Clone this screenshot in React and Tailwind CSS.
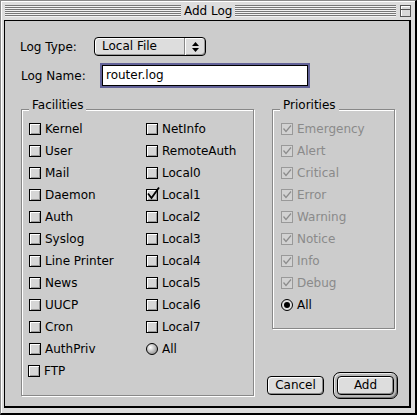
import React from 'react';

const facilitiesLeft = ['Kernel', 'User', 'Mail', 'Daemon', 'Auth', 'Syslog', 'Line Printer', 'News', 'UUCP', 'Cron', 'AuthPriv', 'FTP'];
const facilitiesRight = ['NetInfo', 'RemoteAuth', 'Local0', 'Local1', 'Local2', 'Local3', 'Local4', 'Local5', 'Local6', 'Local7'];
const priorities = ['Emergency', 'Alert', 'Critical', 'Error', 'Warning', 'Notice', 'Info', 'Debug'];

const Stripes = ({ className }) => (
  <div className={`flex flex-col ${className}`}>
    {[0, 1, 2, 3, 4, 5].map((i) => (
      <div key={i} className="h-[2px] border-t border-[#777777] bg-[#f2f2f2]" />
    ))}
  </div>
);

const CheckBox = ({ checked, disabled }) => {
  if (disabled) {
    return (
      <span className="relative w-[12px] h-[12px] shrink-0 border border-[#999999] bg-[#d2d2d2]">
        <svg className="absolute left-0 top-0" width="10" height="10" viewBox="0 0 10 10">
          <polyline points="1.5,4.5 4,7.5 9,1.5" fill="none" stroke="#8c8c8c" strokeWidth="1.2" />
        </svg>
      </span>
    );
  }
  return (
    <span className="relative w-[12px] h-[12px] shrink-0 border border-black bg-[#d6d6d6] shadow-[inset_1px_1px_0_#ffffff,inset_-1px_-1px_0_#9a9a9a]">
      {checked && (
        <svg className="absolute left-[-2px] top-[-5px] overflow-visible" width="16" height="16" viewBox="0 0 16 16">
          <polyline points="3,8.5 6.5,13 14,2.5" fill="none" stroke="#000000" strokeWidth="1.8" />
        </svg>
      )}
    </span>
  );
};

const Radio = ({ selected }) =>
  selected ? (
    <span className="flex items-center justify-center w-[12px] h-[12px] shrink-0 rounded-full border border-black bg-[#e0e0e0]">
      <span className="w-[6px] h-[6px] rounded-full bg-black" />
    </span>
  ) : (
    <span className="w-[12px] h-[12px] shrink-0 rounded-full border border-black bg-[radial-gradient(circle_at_35%_35%,#ffffff,#b4b4b4_55%,#7a7a7a)]" />
  );

const Row = ({ children, label, disabled, className = '' }) => (
  <div className={`flex items-center h-[22px] ${className}`}>
    {children}
    <span className={`ml-[4px] whitespace-nowrap ${disabled ? 'text-[#8a8a8a]' : 'text-black'}`}>{label}</span>
  </div>
);

const GroupBox = ({ title, className, children }) => (
  <div className={`relative border border-[#888888] shadow-[1px_1px_0_#ffffff,inset_1px_1px_0_#ffffff] ${className}`}>
    <span className="absolute top-[-12px] left-[7px] px-[3px] bg-[#cccccc] leading-[14px]">{title}</span>
    {children}
  </div>
);

export default function App() {
  return (
    <div className="w-[417px] h-[415px] flex flex-col bg-[#dddddd] border-l border-t border-[#8a8a8a] border-r-2 border-b-2 border-r-black border-b-black shadow-[inset_1px_1px_0_#ffffff] text-[12px] leading-[14px] font-['DejaVu_Sans',sans-serif] text-black overflow-hidden">
      {/* Title bar */}
      <div className="flex items-center h-[19px] shrink-0">
        <Stripes className="ml-[4px] w-[176px]" />
        <span className="px-[3px] leading-[14px]">Add Log</span>
        <Stripes className="flex-1" />
        <div className="ml-[4px] mr-[4px] w-[11px] h-[12px] flex flex-col border border-[#555555] bg-[#d8d8d8] shadow-[inset_1px_1px_0_#ffffff]">
          <div className="h-[4px] border-b border-[#555555]" />
        </div>
      </div>

      {/* Content */}
      <div className="ml-[3px] w-[407px] h-[388px] shrink-0 flex flex-col border border-black border-r-2 border-b-2 bg-[#cccccc]">
        <div className="flex items-center pl-[15px] pt-[16px]">
          <span className="w-[74px]">Log Type:</span>
          <div className="flex h-[19px] w-[112px] rounded-[4px] border border-black bg-[#dddddd] shadow-[inset_1px_1px_0_#ffffff,inset_-1px_-1px_0_#999999]">
            <span className="flex-1 pl-[7px] leading-[17px]">Local File</span>
            <span className="w-[21px] flex items-center justify-center border-l border-[#888888] shadow-[inset_1px_0_0_#ffffff]">
              <svg width="7" height="10" viewBox="0 0 7 10">
                <polygon points="3.5,0 7,4 0,4" fill="#000000" />
                <polygon points="0,6 7,6 3.5,10" fill="#000000" />
              </svg>
            </span>
          </div>
        </div>

        <div className="flex items-center pl-[16px] mt-[7px]">
          <span className="w-[79px]">Log Name:</span>
          <div className="h-[25px] w-[210px] border-2 border-[#626298]">
            <div className="h-full border border-black bg-white pl-[3px] leading-[18px]">router.log</div>
          </div>
        </div>

        <div className="flex items-start pl-[16px] mt-[21px]">
          <GroupBox title="Facilities" className="w-[233px] h-[287px] flex pl-[7px] pt-[8px]">
            <div className="w-[117px] flex flex-col">
              {facilitiesLeft.map((f) => (
                <Row key={f} label={f} className={f === 'FTP' ? '-ml-px' : ''}>
                  <CheckBox checked={false} />
                </Row>
              ))}
            </div>
            <div className="flex flex-col">
              {facilitiesRight.map((f) => (
                <Row key={f} label={f}>
                  <CheckBox checked={f === 'Local1'} />
                </Row>
              ))}
              <Row label="All">
                <Radio selected={false} />
              </Row>
            </div>
          </GroupBox>

          <div className="ml-[13px] w-[131px] flex flex-col">
            <GroupBox title="Priorities" className="ml-[5px] w-[123px] h-[220px] flex flex-col pl-[8px] pt-[8px]">
              {priorities.map((p) => (
                <Row key={p} label={p} disabled>
                  <CheckBox checked disabled />
                </Row>
              ))}
              <Row label="All">
                <Radio selected />
              </Row>
            </GroupBox>

            <div className="flex items-center mt-[43px]">
              <button className="w-[57px] h-[19px] rounded-[4px] border border-black bg-[#dddddd] shadow-[inset_1px_1px_0_#ffffff,inset_-1px_-1px_0_#8a8a8a] leading-[17px] text-center">
                Cancel
              </button>
              <div className="ml-[9px] w-[65px] h-[27px] p-[3px] rounded-[7px] border border-black bg-[#b8b8b8] shadow-[inset_1px_1px_0_#e8e8e8,inset_-1px_-1px_0_#777777]">
                <button className="w-full h-full rounded-[4px] border border-black bg-[#dddddd] shadow-[inset_1px_1px_0_#ffffff,inset_-1px_-1px_0_#8a8a8a] leading-[17px] text-center">
                  Add
                </button>
              </div>
            </div>
          </div>
        </div>
      </div>
    </div>
  );
}
